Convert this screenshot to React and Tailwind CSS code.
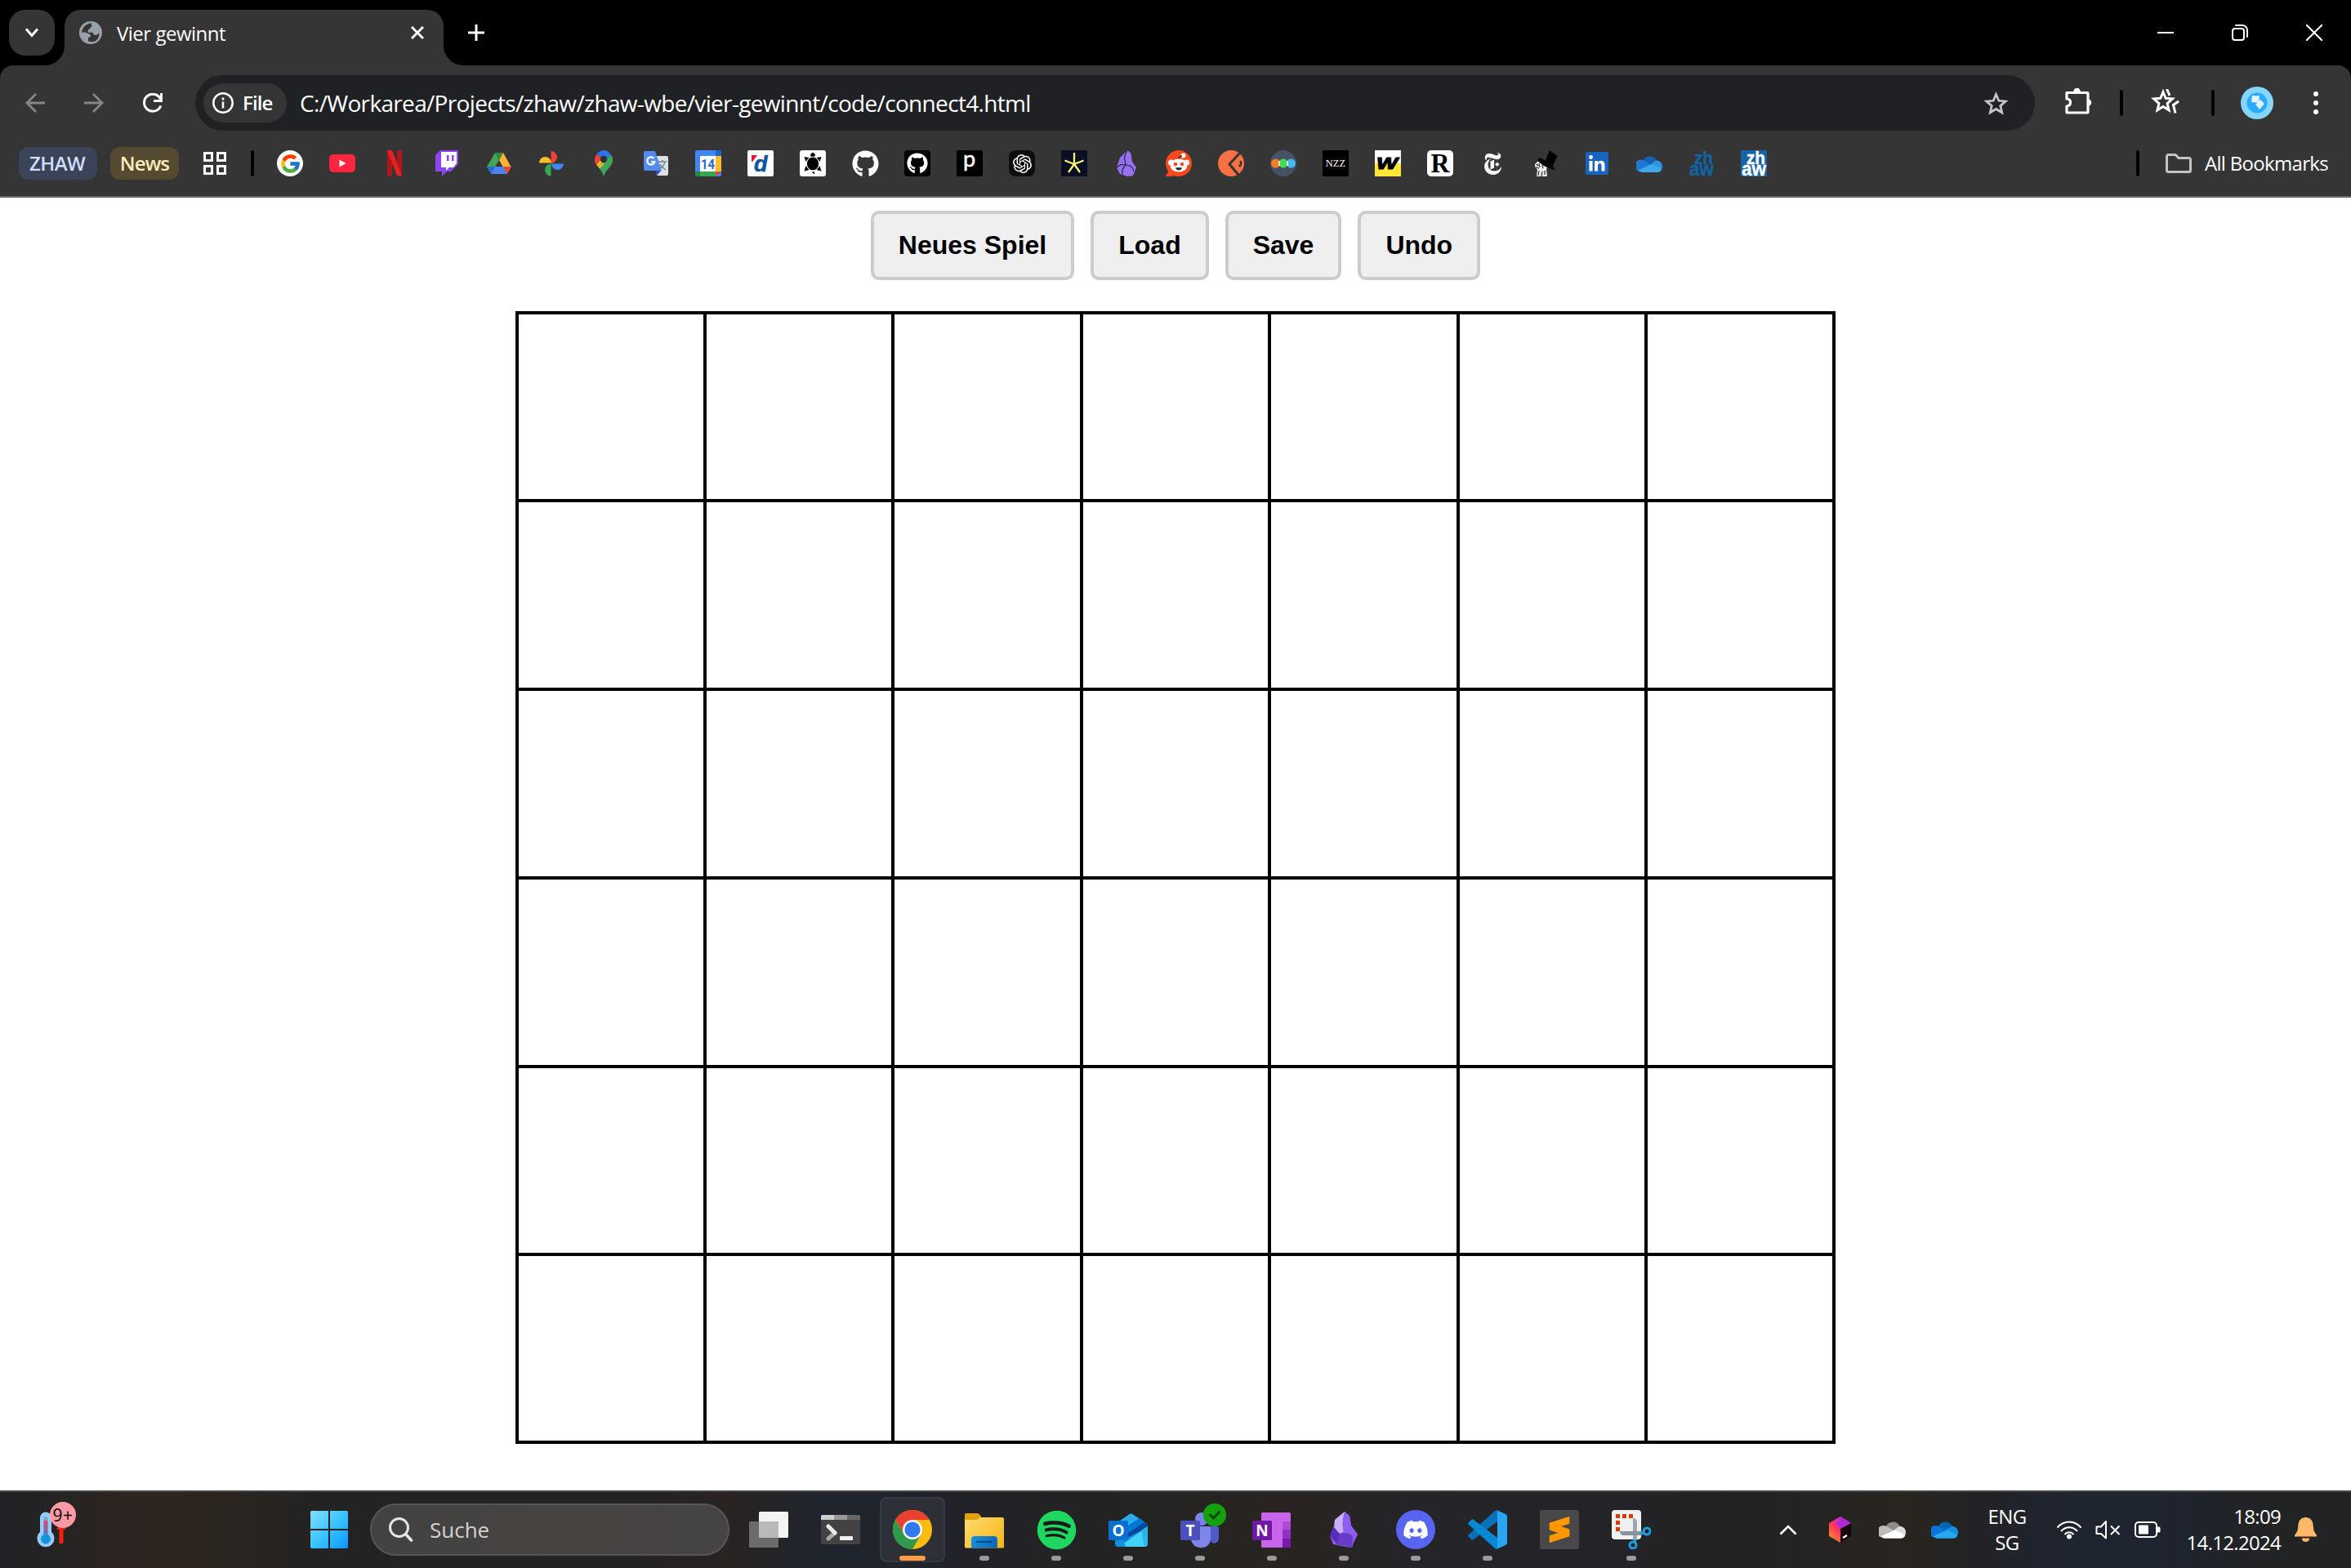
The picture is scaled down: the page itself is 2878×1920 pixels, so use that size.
import React from "react";
import { FcGoogle } from "react-icons/fc";
import { FaGithub, FaSpotify, FaDiscord } from "react-icons/fa";
import { SiOpenai, SiSublimetext, SiNewyorktimes } from "react-icons/si";

const UI = "font-['Open_Sans','Noto_Sans',sans-serif]";

/* ---------- generic pieces ---------- */

function Svg({ size = 32, w, h, vb, children, className = "" }) {
  return (
    <svg
      width={w || size}
      height={h || size}
      viewBox={vb || `0 0 ${w || size} ${h || size}`}
      fill="none"
      className={`block shrink-0 ${className}`}
    >
      {children}
    </svg>
  );
}

function Divider({ className = "" }) {
  return <div className={`h-8 w-1 shrink-0 rounded-sm bg-black ${className}`} />;
}

/* ---------- bookmark favicons ---------- */

const Google = () => (
  <div className="flex size-8 items-center justify-center rounded-full bg-white">
    <FcGoogle size={27} />
  </div>
);

const YouTube = () => (
  <Svg>
    <rect x="0" y="5" width="32" height="22" rx="5" fill="#ff2440" />
    <path d="M12.500 11.500v9l8-4.500z" fill="#fff" />
  </Svg>
);

const Netflix = () => (
  <Svg>
    <path d="M7 0h6v31l-6 1zM19 0h6v32l-6-1z" fill="#b1161b" />
    <path d="M7 0h6l12 32-6-1z" fill="#e2231f" />
  </Svg>
);

const Twitch = () => (
  <Svg>
    <path d="M8 0h22v17l-9 9h-5l-6 6v-6H2V6z" fill="#8c44f7" />
    <path d="M9 2h19v14l-4 5h-5l-4 4v-4H9z" fill="#fff" />
    <path d="M16 6h2.500v7H16zM22 6h2.500v7H22z" fill="#8c44f7" />
  </Svg>
);

const Drive = () => (
  <Svg>
    <path d="M11 3L1 20l5 9 10-17z" fill="#45a35a" />
    <path d="M11 3h10l-5 9z" fill="#2f8b45" />
    <path d="M21 3l10 18H21l-5-9z" fill="#fbb42f" />
    <path d="M11 20h10l5 9H6z" fill="#4c85ee" />
    <path d="M1 20h10l-5 9z" fill="#2a68d9" />
    <path d="M21 20h10l-5 9z" fill="#e84a3c" />
  </Svg>
);

const Photos = () => (
  <Svg>
    <path d="M15.500 1a7.500 7.500 0 0 1 0 15z" fill="#e94435" />
    <path d="M31 16.500a7.500 7.500 0 0 1-15 0z" fill="#4285f4" />
    <path d="M15.500 31.500a7.500 7.500 0 0 1 0-15z" fill="#34a853" />
    <path d="M1 15.500a7.500 7.500 0 0 1 15 0z" fill="#fbbc2e" />
  </Svg>
);

const Maps = () => (
  <Svg>
    <path d="M16 32c-1.500-5-4-8-6.500-11.500L25 6c1.600 2 2 4 2 6 0 8-8.500 11-11 20z" fill="#3fa757" />
    <path d="M9.500 20.500C6.500 17 5 14.500 5 11l6-1 3 5z" fill="#fbbc2e" />
    <path d="M5 12c0-3 1-5 2.500-7.500L14 10l-6.500 7.500C5.800 15.500 5 14 5 12z" fill="#e94435" />
    <path d="M13 15.500l6.500-8L25 6c1.600 2 2 4 2 6 0 2-.6 3.500-1.400 5L14 26c-1.300-2-3-4-4.500-5.500z" fill="#3fa757" />
    <path d="M9.500 20.500l5-5.500 2 1.500-5.500 6z" fill="#fbbc2e" />
    <path d="M7.500 4.500C10 1.500 13 0 16 0c4 0 7 2.500 9 6l-5 5-7-2z" fill="#2f74e8" />
    <circle cx="16" cy="11" r="4.200" fill="#303030" />
  </Svg>
);

const Translate = () => (
  <Svg>
    <path d="M14 7h15a2 2 0 0 1 2 2v20a2 2 0 0 1-2 2H17z" fill="#dfe0e2" />
    <path d="M15 24h8l-6 7z" fill="#3a45b8" />
    <path d="M2 1h13l8 24H3a2 2 0 0 1-2-2V3a2 2 0 0 1 1-2z" fill="#528cf0" />
    <path d="M13.500 10a4.600 4.600 0 1 0 .9 4H10" stroke="#fff" strokeWidth="2.200" />
    <path d="M19 14h10M24 12v2M27 14c-1 4-3 7-7 9M21 17c1 3 4 5 7 7" stroke="#728790" strokeWidth="1.500" />
  </Svg>
);

const Calendar = () => (
  <Svg>
    <rect width="32" height="32" rx="2" fill="#4285f4" />
    <path d="M25 0h5a2 2 0 0 1 2 2v5h-7z" fill="#1b66cf" />
    <path d="M25 7h7v19h-7z" fill="#fbbc2e" />
    <path d="M0 26h25v6H2a2 2 0 0 1-2-2z" fill="#34a853" />
    <path d="M0 26h6v6H2a2 2 0 0 1-2-2z" fill="#1e8a42" />
    <path d="M25 26h7l-7 6z" fill="#ea4335" />
    <path d="M6 7h19v19H6z" fill="#fff" />
    <text x="15.500" y="22.500" textAnchor="middle" fontSize="17" fontWeight="700" fill="#2a67cf" fontFamily="Roboto, sans-serif" textLength="17" lengthAdjust="spacingAndGlyphs">14</text>
  </Svg>
);

const Digitec = () => (
  <Svg>
    <rect width="32" height="32" rx="2" fill="#fff" />
    <path d="M5 6h7l-6 8H5z" fill="#e8112d" />
    <text x="8" y="25.500" fontSize="27" fontWeight="700" fontStyle="italic" fill="#0f559d" stroke="#0f559d" strokeWidth="0.600" fontFamily="Liberation Sans, sans-serif">d</text>
  </Svg>
);

const Turtle = () => (
  <Svg>
    <rect width="32" height="32" rx="3" fill="#fff" />
    <path d="M16 2.500l3 2.500-1 3.500h-4L13 5z" fill="#000" />
    <path d="M5.500 8l6 1-4 5zM26.500 8l-6 1 4 5zM5.500 25.500l2-6.500 4 5zM26.500 25.500l-2-6.500-4 5zM14.500 26.500l3.500 0 0 3z" fill="#000" />
    <ellipse cx="16" cy="16.500" rx="7.600" ry="8.500" fill="#000" stroke="#fff" strokeWidth="1" />
  </Svg>
);

const Github = () => <FaGithub size={33} color="#fff" className="shrink-0" />;

const GithubDark = () => (
  <div className="flex size-8 items-center justify-center rounded-sm bg-black">
    <FaGithub size={26} color="#fff" />
  </div>
);

const LetterP = () => (
  <Svg>
    <rect width="32" height="32" rx="2" fill="#000" />
    <text x="8" y="20" fontSize="27" fill="#fff" stroke="#fff" strokeWidth="0.500" fontFamily="Lato, sans-serif">p</text>
  </Svg>
);

const OpenAI = () => (
  <div className="flex size-8 items-center justify-center rounded-lg bg-[#0d0d0d]">
    <SiOpenai size={23} color="#fff" />
  </div>
);

const Star = () => (
  <Svg>
    <rect width="32" height="32" fill="#0a0e22" />
    <path d="M16 3v14M16 17L4.500 12.500M16 17l11.500-4.500M16 17L9 27M16 17l7 10" stroke="#fbf472" strokeWidth="2.300" />
  </Svg>
);

const Obsidian = () => (
  <Svg>
    <path d="M17 0l4 3 2 11 5 7-4 10-7 1-9-3-4-8 4-12z" fill="#9571f1" />
    <path d="M17 0c-4 6-4 10-2 18M4 21c5-4 6-4 11-3M15 18c-4 4-5 7-4 12M15 18c5 0 9 3 10 8" stroke="#2b2440" strokeWidth="1.200" />
  </Svg>
);

const Reddit = () => (
  <Svg>
    <circle cx="16" cy="16" r="16" fill="#fb481e" />
    <path d="M0 32l4-8 6 8z" fill="#fb481e" />
    <circle cx="6.500" cy="15" r="3.500" fill="#fff" />
    <circle cx="25.500" cy="15" r="3.500" fill="#fff" />
    <circle cx="21.500" cy="6.500" r="3" fill="#fff" />
    <path d="M16 11c0-3 1.500-4 4-4" stroke="#222" strokeWidth="1.300" />
    <ellipse cx="16" cy="18.500" rx="10.500" ry="8" fill="#fff" />
    <circle cx="12" cy="17" r="2.300" fill="#fb481e" />
    <circle cx="20" cy="17" r="2.300" fill="#fb481e" />
    <path d="M12 21.500c2-.8 6-.8 8 0-1 4-7 4-8 0z" fill="#2a2a2a" />
  </Svg>
);

const Peel = () => (
  <Svg>
    <circle cx="16" cy="16" r="16" fill="#f97142" />
    <path d="M28 2L14 17l11 13" stroke="#353535" strokeWidth="3" />
    <path d="M26 20c2-2 2.500-5 1.500-7" stroke="#353535" strokeWidth="2.500" />
  </Svg>
);

const Dots = () => (
  <Svg>
    <circle cx="16" cy="16" r="16" fill="#465364" />
    <circle cx="6.500" cy="16" r="5.500" fill="#ff7c24" />
    <circle cx="25.500" cy="16" r="5.500" fill="#45b8f4" />
    <circle cx="16" cy="16" r="5.500" fill="#45dc50" />
    <path d="M11 13v6M21 13v6" stroke="#e9fbe6" strokeWidth="1.600" />
  </Svg>
);

const Nzz = () => (
  <Svg>
    <rect width="32" height="32" fill="#000" />
    <text x="16" y="20" textAnchor="middle" fontSize="12.500" fill="#fff" fontFamily="Liberation Serif, serif">NZZ</text>
  </Svg>
);

const Watson = () => (
  <Svg>
    <rect width="32" height="32" fill="#fff" />
    <path d="M0 16h32v16H0z" fill="#ffe637" />
    <text x="2" y="23" fontSize="20" fontWeight="700" fontStyle="italic" fill="#000" stroke="#000" strokeWidth="1.200" fontFamily="Liberation Sans, sans-serif" textLength="26" lengthAdjust="spacingAndGlyphs">W</text>
  </Svg>
);

const LetterR = () => (
  <Svg>
    <rect width="32" height="32" rx="5" fill="#fff" />
    <text x="16" y="27" textAnchor="middle" fontSize="34" fontWeight="700" fill="#000" fontFamily="Liberation Serif, serif" textLength="23" lengthAdjust="spacingAndGlyphs">R</text>
  </Svg>
);

const Nyt = () => (
  <div className="flex size-8 items-center justify-center">
    <SiNewyorktimes size={27} color="#f4f4f4" />
  </div>
);

const TopHat = () => (
  <Svg>
    <path d="M4 17l4-4 7 1 5 6-2 3 1 9H6l1-8-3-4z" fill="#e9e9e9" />
    <path d="M5.500 17l3 2M9 16l1 5M13 18l1 4M5 21l4 1M9 25l-1 6M13 26l-1 6M16 25v5" stroke="#222" strokeWidth="1.100" />
    <path d="M22 0l9.600 7L26 19l3 5-6-1.500C17 21 10 16 7 12.500L9 9l8 3.500z" fill="#000" />
  </Svg>
);

const LinkedIn = () => (
  <Svg>
    <rect x="2" y="2" width="28" height="28" rx="2.500" fill="#1765c1" />
    <path d="M6.500 13h4v12.500h-4zM13 13h4v2c2-3.500 8.500-3 8.500 2.500v8h-4V19c0-4-4.500-4-4.500 0v6.500h-4z" fill="#fff" />
    <circle cx="8.500" cy="8.500" r="2.400" fill="#fff" />
  </Svg>
);

function Cloud({ w = 32, h = 21, a = "#1560b5", b = "#1c78d4", c = "#3fa9ec", d = "#2f94e4", className = "" }) {
  return (
    <Svg w={w} h={h} vb="0 0 32 21" className={className}>
      <path d="M8 8a9 9 0 0 1 17-1l-8 8z" fill={a} />
      <path d="M9 6.500l10 5.500-17 7.500A7.300 7.300 0 0 1 9 6.500z" fill={b} />
      <path d="M18 11l6-4.500a7.300 7.300 0 0 1 7.500 10L20 15z" fill={d} />
      <path d="M2 18.500L19 11l12.500 6c-1 2.500-3 4-6 4H8c-2.500 0-4.500-1-6-2.500z" fill={c} />
    </Svg>
  );
}

const CloudMark = () => (
  <div className="flex size-8 items-center justify-center">
    <Cloud />
  </div>
);

function Zhaw({ box }) {
  const c = box ? "#fff" : "#0f64a6";
  return (
    <Svg>
      {box && <rect width="32" height="32" fill="#1763a8" />}
      <g fill={c} stroke={c} strokeWidth="0.400" fontFamily="Liberation Sans, sans-serif" fontWeight="700" fontSize="22">
        <text x="7" y="16.500" textLength="23" lengthAdjust="spacingAndGlyphs">zh</text>
        <text x="1" y="31" fontSize="24" textLength="30" lengthAdjust="spacingAndGlyphs">aw</text>
      </g>
    </Svg>
  );
}
const ZhawPlain = () => <Zhaw />;
const ZhawBox = () => <Zhaw box />;

const FAVICONS = [
  Google, YouTube, Netflix, Twitch, Drive, Photos, Maps, Translate, Calendar, Digitec,
  Turtle, Github, GithubDark, LetterP, OpenAI, Star, Obsidian, Reddit, Peel, Dots,
  Nzz, Watson, LetterR, Nyt, TopHat, LinkedIn, CloudMark, ZhawPlain, ZhawBox,
];

/* ---------- browser chrome ---------- */

function TabStrip() {
  return (
    <div className="flex h-20 shrink-0 items-start bg-black pt-3 text-white">
      <div className="ml-[11px] flex size-14 items-center justify-center rounded-[20px] bg-[#353535]">
        <Svg size={20}>
          <path d="M3 5.500l7 8 7-8" stroke="#fff" strokeWidth="3" />
        </Svg>
      </div>
      <div className="relative ml-3 flex h-[68px] w-[464px] items-start rounded-t-[20px] bg-[#353535] pl-[18px] pr-6">
        <Svg size={24} className="absolute -left-6 bottom-0">
          <path d="M24 0v24H0A24 24 0 0 0 24 0z" fill="#353535" />
        </Svg>
        <Svg size={24} className="absolute -right-6 bottom-0">
          <path d="M0 0v24h24A24 24 0 0 1 0 0z" fill="#353535" />
        </Svg>
        <Svg size={28} className="mt-[14px]">
          <circle cx="14" cy="14" r="14" fill="#9aa0a8" />
          <path d="M15 2.500c-3 0-8 2-10 5.500C3 12 3 13 3 14c3-1 5 0 8 1 2 .5 3 2 3 3.500 0 1-2 1-3 1.500v4.500c8 3 14-3 13.500-10-2 1-4 3-6 2-2-1-1-3-3-3h-4V10h3V6.500h2z" fill="#353535" />
          <path d="M15 2.500c-1 2 1 3 1 4.500-2 0-3 1-3.500 3-1 0-2.500 1-1.500 3.500h6c0 2 1 3.500 3 3.500 2 0 3-2 4.500-2.500C25 8 21 3 15 2.500z" fill="#9aa0a8" />
        </Svg>
        <div className={`${UI} ml-[18px] mt-[13px] flex-1 whitespace-nowrap text-[24px] leading-8 tracking-[-0.5px]`}>Vier gewinnt</div>
        <Svg size={16} className="mt-5">
          <path d="M1 1l14 14M15 1L1 15" stroke="#fff" strokeWidth="3" />
        </Svg>
      </div>
      <Svg size={20} className="ml-[30px] mt-[18px]">
        <path d="M10 0v20M0 10h20" stroke="#fff" strokeWidth="3" />
      </Svg>
      <div className="ml-auto mr-[35px] mt-[18px] flex items-center gap-[71px]">
        <Svg size={20}><path d="M0 10h20" stroke="#fff" strokeWidth="2" /></Svg>
        <Svg size={20}>
          <rect x="1" y="5" width="14" height="14" rx="3" stroke="#fff" strokeWidth="2" />
          <path d="M5 1h8a6 6 0 0 1 6 6v8" stroke="#fff" strokeWidth="2" strokeLinecap="round" />
        </Svg>
        <Svg size={20}><path d="M0 0l20 20M20 0L0 20" stroke="#fff" strokeWidth="2" /></Svg>
      </div>
    </div>
  );
}

function Toolbar() {
  return (
    <div className="flex h-[92px] items-center">
      <Svg size={24} className="ml-[31px]">
        <path d="M24 12H2M13 1L2 12l11 11" stroke="#868686" strokeWidth="2.800" />
      </Svg>
      <Svg size={24} className="ml-12">
        <path d="M0 12h22M11 1l11 11-11 11" stroke="#868686" strokeWidth="2.800" />
      </Svg>
      <Svg size={24} className="ml-12">
        <path d="M21.800 15.500A10.500 10.500 0 1 1 22 8.500" stroke="#fff" strokeWidth="3" />
        <path d="M22.500 0v9.500H13" stroke="#fff" strokeWidth="3" />
      </Svg>
      <div className="ml-10 flex h-[68px] w-[2252px] items-center rounded-full bg-[#202125]">
        <div className="ml-[10px] flex h-12 w-[102px] items-center rounded-full bg-[#353535] pl-[11px]">
          <Svg size={26}>
            <circle cx="13" cy="13" r="11.700" stroke="#fff" strokeWidth="2.500" />
            <path d="M13 11.500v8M13 6.500v3" stroke="#fff" strokeWidth="2.600" />
          </Svg>
          <span className={`${UI} ml-[11px] text-[24px] font-semibold leading-8 tracking-[-0.9px] text-white`}>File</span>
        </div>
        <span className={`${UI} ml-4 whitespace-nowrap text-[28px] leading-9 tracking-[-0.67px] text-white`}>
          C:/Workarea/Projects/zhaw/zhaw-wbe/vier-gewinnt/code/connect4.html
        </span>
        <Svg w={31} h={29} className="ml-auto mr-8">
          <path d="M15.500 3.500l3.300 7.800 8.400.7-6.400 5.600 1.900 8.200-7.200-4.300-7.200 4.300 1.900-8.200L3.800 12l8.400-.7z" stroke="#c4c4c4" strokeWidth="2.800" />
        </Svg>
      </div>
      <Svg w={33} h={34} className="-mt-1 ml-[37px]">
        <path d="M11 5a3.500 3.500 0 0 1 7 0z" fill="#fff" stroke="#fff" strokeWidth="1.500" />
        <path d="M28 15a3.500 3.500 0 0 1 0 7z" fill="#fff" stroke="#fff" strokeWidth="1.500" />
        <path d="M2 6.500h25a1 1 0 0 1 1 1V30a1 1 0 0 1-1 1H3a1 1 0 0 1-1-1v-7c6-.5 6-8.500 0-9z" stroke="#fff" strokeWidth="3.200" strokeLinejoin="round" />
      </Svg>
      <Divider className="ml-[34px]" />
      <Svg w={36} h={30} className="-mt-1 ml-[33px]">
        <path d="M16 3.500l3.200 7.800 8.200.7-6.300 5.600 1.900 8.200-7-4.300-7 4.300 1.900-8.200L4.600 12l8.200-.7z" stroke="#fff" strokeWidth="3" />
        <path d="M20.500 0l3.500 8M35 15l-6.500 4.500 2.500 10" stroke="#fff" strokeWidth="3" />
      </Svg>
      <Divider className="ml-[39px]" />
      <Svg size={40} className="ml-8">
        <circle cx="20" cy="20" r="20" fill="#84d5ff" />
        <circle cx="20" cy="20" r="12.500" fill="#2ba9fb" />
        <path d="M14 11l9 .5-1 8.500-9-1zM24 16l5 5-6 7-5-6z" fill="#dff3ff" />
      </Svg>
      <Svg w={6} h={28} className="ml-[49px]">
        <circle cx="3" cy="3" r="3" fill="#fff" />
        <circle cx="3" cy="14" r="3" fill="#fff" />
        <circle cx="3" cy="25" r="3" fill="#fff" />
      </Svg>
    </div>
  );
}

function BookmarksBar() {
  return (
    <div className="flex h-[68px] items-center pb-[12px]">
      <div className={`${UI} ml-[23px] flex h-10 w-24 items-center justify-center rounded-xl bg-[#3a4358] pr-[2px] text-[24px] font-semibold tracking-[-0.6px] text-[#cfdffd]`}>ZHAW</div>
      <div className={`${UI} ml-4 flex h-10 w-[84px] items-center justify-center rounded-xl bg-[#544a30] text-[24px] font-semibold tracking-[-0.9px] text-[#fdebb9]`}>News</div>
      <Svg size={28} className="ml-[30px]">
        <path d="M1.500 1.500h9v9h-9zM17.500 1.500h9v9h-9zM1.500 17.500h9v9h-9zM17.500 17.500h9v9h-9z" stroke="#fff" strokeWidth="3" />
      </Svg>
      <Divider className="ml-[30px]" />
      <div className="ml-7 flex items-center gap-8">
        {FAVICONS.map((Icon, i) => (
          <div key={i} className="flex size-8 items-center justify-center"><Icon /></div>
        ))}
      </div>
      <Divider className="ml-auto" />
      <Svg w={32} h={24} className="ml-8">
        <path d="M1.500 3.500a2 2 0 0 1 2-2h8.500l4 4h12.500a2 2 0 0 1 2 2v13a2 2 0 0 1-2 2h-25a2 2 0 0 1-2-2z" stroke="#c4c4c4" strokeWidth="3" />
      </Svg>
      <span className={`${UI} ml-4 mr-7 whitespace-nowrap text-[24px] leading-8 tracking-[-0.68px] text-white`}>All Bookmarks</span>
    </div>
  );
}

/* ---------- page ---------- */

function GameButton({ children }) {
  return (
    <button className="h-[85px] rounded-[10px] border-4 border-[#ccc] bg-[#efefef] px-[30px] font-['Liberation_Sans',Arial,sans-serif] text-[32px] font-bold leading-[37px] text-black">
      {children}
    </button>
  );
}

function Game() {
  return (
    <main className="flex flex-1 flex-col items-center bg-white pt-4">
      <div className="flex gap-5">
        {["Neues Spiel", "Load", "Save", "Undo"].map((t) => (
          <GameButton key={t}>{t}</GameButton>
        ))}
      </div>
      <div className="mt-[38px] grid h-[1387px] w-[1616px] grid-cols-[226px_226px_227px_226px_227px_226px_226px] grid-rows-[226px_227px_227px_227px_226px_226px] gap-1 bg-black p-1">
        {Array.from({ length: 42 }, (_, i) => (
          <div key={i} className="bg-white" />
        ))}
      </div>
    </main>
  );
}

/* ---------- taskbar icons ---------- */

const TaskView = () => (
  <Svg size={48}>
    <rect x="12" y="2" width="36" height="32" rx="1.500" fill="#f3f3f3" />
    <rect x="0" y="14" width="36" height="32" rx="1.500" fill="#6b6b6b" />
    <path d="M12 14h24v20H12z" fill="#b9b9b9" />
  </Svg>
);

const Terminal = () => (
  <Svg size={48}>
    <rect x="0" y="6" width="48" height="36" rx="2" fill="#424242" />
    <path d="M0 12V7.500A1.500 1.500 0 0 1 1.500 6H16v6z" fill="#cdcdcd" />
    <path d="M16 6h16v6H16z" fill="#999" />
    <path d="M32 6h14.500A1.500 1.500 0 0 1 48 7.500V12H32z" fill="#666" />
    <path d="M17 28l-8 7" stroke="#a9a9a9" strokeWidth="5" strokeLinecap="round" />
    <path d="M9 20l8 8" stroke="#eaeaea" strokeWidth="5" strokeLinecap="round" />
    <rect x="23" y="32" width="16" height="5" rx="1" fill="#f0f0f0" />
  </Svg>
);

const Chrome = () => (
  <Svg size={48}>
    <circle cx="24" cy="24" r="24" fill="#fbbc0d" />
    <path d="M24 12h20.800A24 24 0 0 0 3.200 12L13.600 30z" fill="#ea4031" />
    <path d="M34.400 30L24 48A24 24 0 0 1 3.200 12l10.400 18z" fill="#2d9b4b" />
    <circle cx="24" cy="24" r="12" fill="#fff" />
    <circle cx="24" cy="24" r="9.600" fill="#3079ed" />
  </Svg>
);

const Explorer = () => (
  <Svg size={48}>
    <defs>
      <linearGradient id="fold" x1="0" y1="0" x2="48" y2="48" gradientUnits="userSpaceOnUse">
        <stop stopColor="#ffdf7c" />
        <stop offset="1" stopColor="#f7b512" />
      </linearGradient>
      <linearGradient id="foldb" x1="8" y1="32" x2="40" y2="46" gradientUnits="userSpaceOnUse">
        <stop stopColor="#1593dd" />
        <stop offset="1" stopColor="#0f66b5" />
      </linearGradient>
    </defs>
    <path d="M0 6a2 2 0 0 1 2-2h13c2 0 3 1 5 4v6H0z" fill="#e3a008" />
    <path d="M0 12h14c3 0 3-3 6-3h26a2 2 0 0 1 2 2v34a1.500 1.500 0 0 1-1.500 1.500h-45A1.500 1.500 0 0 1 0 45z" fill="url(#fold)" />
    <path d="M8 46.500V36a4 4 0 0 1 4-4h24a4 4 0 0 1 4 4v10.500z" fill="url(#foldb)" />
    <path d="M14 39h20" stroke="#0b4d8a" strokeWidth="2" />
  </Svg>
);

const Spotify = () => (
  <div className="flex size-12 items-center justify-center rounded-full bg-[#191919]">
    <FaSpotify size={49} color="#1ed760" className="shrink-0" />
  </div>
);

function OfficeTile({ letter, fill, x = 0 }) {
  return (
    <g>
      <rect x={x} y="13" width="24" height="24" rx="1.500" fill={fill} />
      <text x={x + 12} y="31.500" textAnchor="middle" fontSize="19" fontWeight="700" fill="#fff" fontFamily="Open Sans, sans-serif">{letter}</text>
    </g>
  );
}

const Outlook = () => (
  <Svg size={48}>
    <path d="M8 17L26 5a3 3 0 0 1 3 0l18 12v24a4 4 0 0 1-4 4H12a4 4 0 0 1-4-4z" fill="#1590e0" />
    <path d="M9 17L26 5a3 3 0 0 1 3 0l8 5-18 13z" fill="#2bacea" />
    <path d="M20 22l18-12 9 7v3L26 32z" fill="#0078d4" />
    <path d="M24 28l20-13 4 4-1 3-24 12z" fill="#05489c" />
    <path d="M48 20v21a4 4 0 0 1-4 4H23c-3 0-4-3-3-5z" fill="#41d3fb" />
    <path d="M48 20v21a4 4 0 0 1-4 4l-4-20z" fill="#28b4ee" />
    <OfficeTile letter="O" fill="#0a6fd0" />
  </Svg>
);

const Teams = () => (
  <div className="relative">
    <Svg size={48}>
      <circle cx="26" cy="11" r="8" fill="#7b83eb" />
      <path d="M34 20h11a2 2 0 0 1 2 2v12c0 8-8 8-10 4z" fill="#5059c9" />
      <path d="M13 20h22a2 2 0 0 1 2 2v13c0 15-23 15-24 0z" fill="#7f85ea" />
      <OfficeTile letter="T" fill="#4b50bd" />
    </Svg>
    <Svg size={28} className="absolute -top-2 left-7">
      <circle cx="14" cy="14" r="14" fill="#13a10e" />
      <path d="M8.500 14l4 4 7-7.500" stroke="#0b4708" strokeWidth="3" strokeLinecap="round" />
    </Svg>
  </div>
);

const OneNote = () => (
  <Svg size={48}>
    <rect x="11" y="3" width="36" height="43" rx="1.500" fill="#ca64ea" />
    <path d="M37 14h10v10H37z" fill="#ae4bd5" />
    <path d="M37 24h10v11H37z" fill="#9332bf" />
    <path d="M37 35h10v10l-1 1h-9z" fill="#7719aa" />
    <OfficeTile letter="N" fill="#7018a6" />
  </Svg>
);

const ObsidianBig = () => (
  <Svg size={48}>
    <path d="M25 2l6 5 2 12 8 11-5 10-2 6-8-1-15-3-4-10 5-13 1-7z" fill="#8a5be6" />
    <path d="M25 2L13 12l-1 13 7 4 6-3c-2-9-2-13 0-24z" fill="#c9b0f6" />
    <path d="M25 2l6 5 2 12 8 11-5 8-4-8-8-2c-2-9-2-15 1-26z" fill="#8f5cf0" />
    <path d="M12 21l7 8-2 14-10-11 3-9z" fill="#5c2cb8" />
    <path d="M19 29c6-2 11-1 16 3l-1 14c-6-1-10-3-17-3z" fill="#6a3bc9" />
  </Svg>
);

const Discord = () => (
  <div className="flex size-12 items-center justify-center rounded-full bg-[#5865f2]">
    <FaDiscord size={32} color="#fff" />
  </div>
);

const VSCode = () => (
  <Svg size={48}>
    <path d="M36 0v14L7 36c-1 1-2 1-3 0l-3-3c-1-1-1-2 0-3L33 1z" fill="#0b70b8" />
    <path d="M36 34v14l-3-1L1 18c-1-1-1-2 0-3l3-3c1-1 2-1 3 0z" fill="#0788d3" />
    <path d="M35 0l11 5c1 .5 2 1.500 2 3v32c0 1.500-1 2.500-2 3l-11 5c1-.5 1-1 1-3V3c0-1.500 0-2.500-1-3z" fill="#27a5f2" />
  </Svg>
);

const Sublime = () => (
  <div className="flex size-12 items-center justify-center rounded-[3px] bg-[#484848]">
    <SiSublimetext size={32} color="#ff9800" />
  </div>
);

const Snip = () => (
  <Svg size={48}>
    <rect x="0" y="0" width="36" height="36" rx="4" fill="#eef0f2" />
    <path d="M5 5h5v5H5zM13 5h5v5h-5zM21 5h5v5h-5zM5 13h5v5H5zM5 21h5v5H5z" fill="#d83b01" />
    <path d="M26 10c3 0 5 2 5 5v22h-5z" fill="#9aa5ae" />
    <path d="M10 26c0 3 2 5 5 5h22v-5z" fill="#87929b" />
    <circle cx="43" cy="26" r="4" stroke="#1b9de2" strokeWidth="3" />
    <circle cx="26" cy="43" r="4" stroke="#1b9de2" strokeWidth="3" />
    <path d="M28.500 36v4M35 28.500h4" stroke="#1b9de2" strokeWidth="3" />
  </Svg>
);

const APPS = [
  { Icon: TaskView },
  { Icon: Terminal },
  { Icon: Chrome, active: true },
  { Icon: Explorer, open: true },
  { Icon: Spotify, open: true },
  { Icon: Outlook, open: true },
  { Icon: Teams, open: true },
  { Icon: OneNote, open: true },
  { Icon: ObsidianBig, open: true },
  { Icon: Discord, open: true },
  { Icon: VSCode, open: true },
  { Icon: Sublime },
  { Icon: Snip, open: true },
];

function AppSlot({ Icon, open, active }) {
  const box = active
    ? "rounded-lg bg-white/[0.06] ring-2 ring-inset ring-white/[0.05]"
    : "";
  return (
    <div className={`flex h-20 w-20 flex-col items-center pt-4 ${box}`}>
      <Icon />
      {active && <div className="mt-2 h-1.5 w-8 rounded-full bg-[#ff9d45]" />}
      {open && <div className="mt-2 h-1.5 w-3 rounded-full bg-[#9a9a9a]" />}
    </div>
  );
}

function Taskbar() {
  return (
    <footer className="flex h-[95px] shrink-0 items-center border-t-2 border-[#454746] bg-linear-[90deg,#202226_0%,#2e2520_6%,#2b251f_9%,#232323_14%,#222322_26%,#292322_31%,#1f242d_35%,#1f242d_37%,#232226_43%,#242422_49%,#292421_55%,#252428_60%,#232326_75%,#29251f_81%,#232326_84%,#1e2430_88%,#1e2430_92%,#222324_96%,#222324_100%] pb-[1px] text-white">
      <div className="relative ml-[45px] h-12 w-12">
        <Svg w={22} h={46} className="mt-0.5">
          <path d="M4 7.500a7 7 0 0 1 14 0V25a10.500 10.500 0 1 1-14 0z" fill="#97cbfb" />
          <path d="M8.500 8.500a2.500 2.500 0 0 1 5 0V28h-5z" fill="#7ba3c4" />
          <path d="M8.500 11h5v18h-5z" fill="url(#therm)" />
          <circle cx="11" cy="33.500" r="6" fill="#1693df" />
          <defs>
            <linearGradient id="therm" x1="0" y1="10" x2="0" y2="30" gradientUnits="userSpaceOnUse">
              <stop stopColor="#f8436b" />
              <stop offset="1" stopColor="#3a80c8" />
            </linearGradient>
          </defs>
        </Svg>
        <Svg w={12} h={20} className="absolute left-6 top-[21px]">
          <path d="M2 0h8l2 3H8.500v15a2 2 0 0 1-5 0V3H0z" fill="#fb1f10" />
        </Svg>
        <div className="absolute -top-2.5 left-4 flex size-8 items-center justify-center rounded-full bg-[#ff99a4] font-['Open_Sans',sans-serif] text-[21px] leading-none tracking-[0.5px] text-black">9+</div>
      </div>
      <Svg size={46} className="ml-[287px]">
        <defs>
          <linearGradient id="win" x1="0" y1="0" x2="46" y2="46" gradientUnits="userSpaceOnUse">
            <stop stopColor="#84dcff" />
            <stop offset="0.500" stopColor="#3cc4fd" />
            <stop offset="1" stopColor="#0a95ff" />
          </linearGradient>
        </defs>
        <path d="M1 0h21v22H0V1zM24 0h21l1 1v21H24zM0 24h22v22H1l-1-1zM24 24h22v21l-1 1H24z" fill="url(#win)" />
      </Svg>
      <div className="ml-[27px] flex h-16 w-[440px] items-center rounded-full border-2 border-[#565656] bg-linear-to-r from-[#424242] via-[#474341] to-[#454343]">
        <Svg size={30} className="ml-[21px]">
          <circle cx="12.500" cy="12.500" r="11" stroke="#e6e6e6" strokeWidth="3" />
          <path d="M20.500 20.500l7 7.500" stroke="#e6e6e6" strokeWidth="3.600" strokeLinecap="round" />
        </Svg>
        <span className={`${UI} ml-[20px] text-[26px] text-[#d2d2d2]`}>Suche</span>
      </div>
      <div className="ml-2 flex items-center gap-2">
        {APPS.map((a, i) => (
          <AppSlot key={i} {...a} />
        ))}
      </div>
      <Svg w={22} h={13} className="ml-[141px]">
        <path d="M1.500 11.500L11 2l9.500 9.500" stroke="#fff" strokeWidth="2.600" />
      </Svg>
      <Svg w={27} h={32} className="ml-[39px]">
        <defs>
          <linearGradient id="jbl" x1="0" y1="26" x2="20" y2="6" gradientUnits="userSpaceOnUse">
            <stop stopColor="#ff8a1c" />
            <stop offset="0.550" stopColor="#fe2f63" />
            <stop offset="1" stopColor="#d936c8" />
          </linearGradient>
        </defs>
        <path d="M14 0l13 8-13 7v17L0 24V8z" fill="url(#jbl)" />
        <path d="M14 0l13 8-13 7-6-6z" fill="#b02ad3" />
        <path d="M14 15l13-7v16l-13 8z" fill="#17040f" />
        <path d="M17 26l5-3" stroke="#fff" strokeWidth="2.200" />
      </Svg>
      <Cloud w={33} h={22} a="#8d8d8d" b="#bcbcbc" c="#ffffff" d="#dcdcdc" className="ml-[34px]" />
      <Cloud w={33} h={22} a="#0563b8" b="#0a74d8" c="#28a8ee" d="#1490df" className="ml-[31px]" />
      <div className={`${UI} ml-[37px] flex w-[46px] flex-col items-center text-[24px] leading-8 tracking-[-0.6px]`}>
        <span>ENG</span>
        <span>SG</span>
      </div>
      <Svg w={32} h={24} className="ml-[37px]">
        <path d="M1.500 9.500c8-9.300 21-9.300 29 0M6 14c5.500-6.500 14.500-6.500 20 0M10.500 18c3-3.600 8-3.600 11 0" stroke="#fff" strokeWidth="2" />
        <circle cx="16" cy="20.500" r="3" fill="#fff" />
      </Svg>
      <Svg w={31} h={24} className="ml-4">
        <path d="M1.500 8.500H7L13 2v20.500L7 17H1.500z" stroke="#fff" strokeWidth="2" strokeLinejoin="round" />
        <path d="M19 7.500l10.500 10.500M29.500 7.500L19 18" stroke="#fff" strokeWidth="2" />
      </Svg>
      <Svg w={32} h={22} className="ml-[17px]">
        <rect x="1" y="2" width="26" height="18" rx="4" stroke="#fff" strokeWidth="2" />
        <rect x="5" y="5.500" width="12" height="11" rx="1" fill="#fff" />
        <path d="M28 7.500h2a1.500 1.500 0 0 1 1.500 1.500v4a1.500 1.500 0 0 1-1.500 1.500h-2z" fill="#fff" />
      </Svg>
      <div className={`${UI} flex w-[147px] flex-col items-end text-[24px] leading-8 tracking-[-0.7px]`}>
        <span>18:09</span>
        <span>14.12.2024</span>
      </div>
      <Svg w={27} h={30} className="ml-[17px]">
        <path d="M13.500 0C18.500 0 22 3.500 22.500 8.500l1 8 3.500 5.500v1.500H0V22l3.500-5.500 1-8C5 3.500 8.500 0 13.500 0zM8.500 25.500h10c-1 6-9 6-10 0z" fill="#ffb867" />
      </Svg>
    </footer>
  );
}

export default function App() {
  return (
    <div className="flex h-[1920px] w-[2878px] flex-col overflow-hidden bg-black">
      <TabStrip />
      <div className="h-[162px] shrink-0 rounded-t-2xl border-b-2 border-[#666] bg-[#353535]">
        <Toolbar />
        <BookmarksBar />
      </div>
      <Game />
      <Taskbar />
    </div>
  );
}
